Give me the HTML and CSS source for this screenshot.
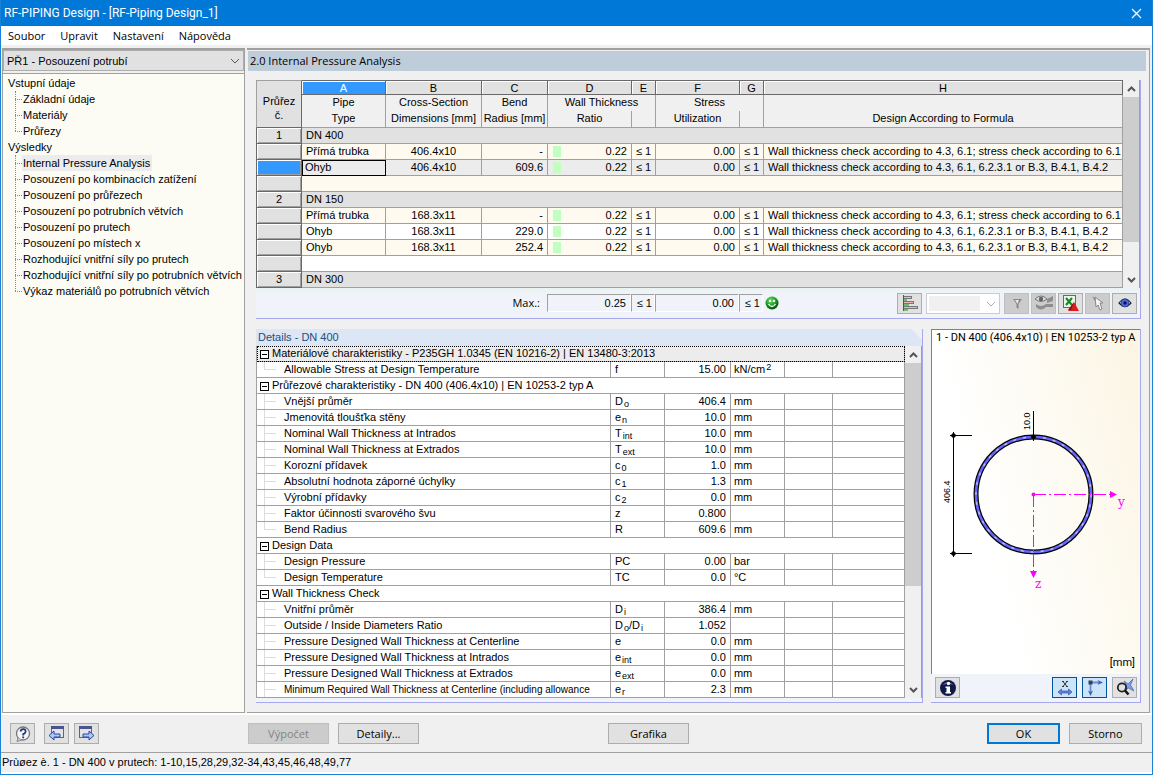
FILE: index.html
```html
<!DOCTYPE html>
<html lang="cs">
<head>
<meta charset="utf-8">
<title>RF-PIPING Design - [RF-Piping Design_1]</title>
<link rel="stylesheet" href="styles.css">
</head>
<body>
<div class="window">
  <header class="titlebar">
    <h1>RF-PIPING Design - [RF-Piping Design_1]</h1>
    <button class="close" aria-label="Close"><svg width="11" height="11"><path d="M1 1L10 10M10 1L1 10" stroke="#fff" stroke-width="1.2"/></svg></button>
  </header>
  <nav class="menubar">
    <button>Soubor</button><button>Upravit</button><button>Nastavení</button><button>Nápověda</button>
  </nav>

  <main class="workspace">
    <aside class="sidebar">
      <div class="case-wrap">
        <select class="case" aria-label="Case"><option>PŘ1 - Posouzení potrubí</option></select>
        <svg class="chev" width="10" height="6"><path d="M1 1L5 5L9 1" fill="none" stroke="#555"/></svg>
      </div>
      <ul class="tree">
        <li><a href="#">Vstupní údaje</a>
          <ul>
            <li><a href="#">Základní údaje</a></li>
            <li><a href="#">Materiály</a></li>
            <li><a href="#">Průřezy</a></li>
          </ul>
        </li>
        <li><a href="#">Výsledky</a>
          <ul>
            <li><a href="#" class="current">Internal Pressure Analysis</a></li>
            <li><a href="#">Posouzení po kombinacích zatížení</a></li>
            <li><a href="#">Posouzení po průřezech</a></li>
            <li><a href="#">Posouzení po potrubních větvích</a></li>
            <li><a href="#">Posouzení po prutech</a></li>
            <li><a href="#">Posouzení po místech x</a></li>
            <li><a href="#">Rozhodující vnitřní síly po prutech</a></li>
            <li><a href="#">Rozhodující vnitřní síly po potrubních větvích</a></li>
            <li><a href="#">Výkaz materiálů po potrubních větvích</a></li>
          </ul>
        </li>
      </ul>
    </aside>

    <section class="content">
      <h2>2.0 Internal Pressure Analysis</h2>
      <div class="panels">
        <section class="panel results">
          <div class="scroller">
            <table class="grid">
              <colgroup><col class="w46"><col class="w84"><col class="w96"><col class="w66"><col class="w84"><col class="w24"><col class="w84"><col class="w24"><col></colgroup>
              <thead>
                <tr class="letters"><th rowspan="3" class="corner">Průřez<br>č.</th><th class="picked">A</th><th>B</th><th>C</th><th>D</th><th>E</th><th>F</th><th>G</th><th>H</th></tr>
                <tr class="names"><th>Pipe</th><th>Cross-Section</th><th>Bend</th><th colspan="2">Wall Thickness</th><th colspan="2">Stress</th><th></th></tr>
                <tr class="names last"><th>Type</th><th>Dimensions [mm]</th><th>Radius [mm]</th><th>Ratio</th><th></th><th>Utilization</th><th></th><th>Design According to Formula</th></tr>
              </thead>
              <tbody>
                <tr class="group"><th>1</th><td colspan="8">DN 400</td></tr>
                <tr class="cream"><th></th><td>Přímá trubka</td><td class="c">406.4x10</td><td class="r">-</td><td class="r bar">0.22</td><td class="c">≤ 1</td><td class="r">0.00</td><td class="c">≤ 1</td><td>Wall thickness check according to 4.3, 6.1; stress check according to 6.1</td></tr>
                <tr class="active"><th></th><td class="cursor">Ohyb</td><td class="c">406.4x10</td><td class="r">609.6</td><td class="r bar">0.22</td><td class="c">≤ 1</td><td class="r">0.00</td><td class="c">≤ 1</td><td>Wall thickness check according to 4.3, 6.1, 6.2.3.1 or B.3, B.4.1, B.4.2</td></tr>
                <tr class="cream"><th></th><td colspan="8"></td></tr>
                <tr class="group"><th>2</th><td colspan="8">DN 150</td></tr>
                <tr class="cream"><th></th><td>Přímá trubka</td><td class="c">168.3x11</td><td class="r">-</td><td class="r bar">0.22</td><td class="c">≤ 1</td><td class="r">0.00</td><td class="c">≤ 1</td><td>Wall thickness check according to 4.3, 6.1; stress check according to 6.1</td></tr>
                <tr><th></th><td>Ohyb</td><td class="c">168.3x11</td><td class="r">229.0</td><td class="r bar">0.22</td><td class="c">≤ 1</td><td class="r">0.00</td><td class="c">≤ 1</td><td>Wall thickness check according to 4.3, 6.1, 6.2.3.1 or B.3, B.4.1, B.4.2</td></tr>
                <tr class="cream"><th></th><td>Ohyb</td><td class="c">168.3x11</td><td class="r">252.4</td><td class="r bar">0.22</td><td class="c">≤ 1</td><td class="r">0.00</td><td class="c">≤ 1</td><td>Wall thickness check according to 4.3, 6.1, 6.2.3.1 or B.3, B.4.1, B.4.2</td></tr>
                <tr><th></th><td colspan="8"></td></tr>
                <tr class="group"><th>3</th><td colspan="8">DN 300</td></tr>
              </tbody>
            </table>
            <div class="scrollbar">
              <svg width="9" height="6"><path d="M1 5L4.500 1.500L8 5" fill="none" stroke="#555" stroke-width="2"/></svg>
              <div class="track"><div class="thumb t-results"></div></div>
              <svg width="9" height="6"><path d="M1 1L4.500 4.500L8 1" fill="none" stroke="#555" stroke-width="2"/></svg>
            </div>
          </div>
          <div class="toolbar">
            <span class="max-label">Max.:</span>
            <output class="box w84">0.25</output><output class="box w24">≤ 1</output><output class="box w84">0.00</output><output class="box w24">≤ 1</output>
            <svg class="smiley" width="14" height="14"><defs><radialGradient id="g" cx=".4" cy=".3" r=".7"><stop offset="0" stop-color="#6fe06a"/><stop offset=".6" stop-color="#169a20"/><stop offset="1" stop-color="#064d0b"/></radialGradient></defs><circle cx="7" cy="7" r="6.500" fill="url(#g)"/><circle cx="5" cy="5" r="1.200" fill="#fff"/><circle cx="9" cy="5" r="1.200" fill="#fff"/><path d="M3.500 8Q7 13 10.500 8" fill="none" stroke="#fff" stroke-width="1.300"/></svg>
            <span class="spacer"></span>
            <div class="tools">
              <button class="ib" aria-label="Bars"><svg width="16" height="16" shape-rendering="crispEdges"><path d="M1.500 0V16" stroke="#555"/><path d="M2 1.500H9.500V3.500H2M2 6.500H11.500V8.500H2M2 11.500H15.500V13.500H2" fill="#f3b6b6" stroke="#777"/><path d="M2 5H5M2 10H7M2 15H6" stroke="#6cbf6c" stroke-width="2"/></svg></button>
              <div class="filter-wrap"><select class="filter" aria-label="Filter" disabled></select><svg class="chev" width="10" height="6"><path d="M1 1L5 5L9 1" fill="none" stroke="#aaa"/></svg></div>
              <button class="ib off" disabled aria-label="Filter rows"><svg width="16" height="16"><path d="M4 4H13L9.500 9V14L7.500 12.500V9Z" fill="#888"/><path d="M6 5H10L8.500 9Z" fill="#e8e8e8"/></svg></button>
              <button class="ib off" disabled aria-label="View options"><svg width="18" height="16"><path d="M0 4Q6-2 12 4Q6 9 0 4Z" fill="#ddd" stroke="#777"/><circle cx="6" cy="4" r="2.200" fill="#666"/><path d="M12 4L18 1V6L12 8ZM1 9Q6 13 11 9H18V12H11Q6 17 1 12Z" fill="#8e8e8e"/></svg></button>
              <button class="ib" aria-label="Export to Excel"><svg width="16" height="16"><rect x=".5" y=".5" width="12" height="12" fill="#eaf7e6" stroke="#2f8f3a"/><path d="M3 3L9 10M9 3L3 10" stroke="#14852a" stroke-width="2"/><path d="M11 7L16 16H5Z" fill="#d81f1f"/><path d="M11 7L8 15H5Z" fill="#8f1010"/></svg></button>
              <button class="ib off" disabled aria-label="Pick"><svg width="16" height="16"><path d="M2 1L6 4L5 6Z" fill="#888"/><path d="M5 2L13 8H10L12 14L10 15L8 10L6 12Z" fill="#f4f4f4" stroke="#888"/></svg></button>
              <button class="ib" aria-label="Show"><svg width="14" height="12"><path d="M1 6Q7-2 13 6Q7 13 1 6Z" fill="#e7ecfa" stroke="#222" stroke-width="1.200"/><circle cx="7" cy="6" r="4" fill="#4a6be0" stroke="#223a90" stroke-width=".8"/><circle cx="7" cy="6" r="1.700" fill="#0a1450"/></svg></button>
            </div>
          </div>
        </section>

        <div class="lower">
          <section class="panel details">
            <h3>Details - DN 400</h3>
            <div class="scroller">
              <div class="clip">
              <table class="props">
                <colgroup><col><col class="w54"><col class="w66"><col class="w54"><col class="w48"><col class="w72"></colgroup>
                <tbody>
                  <tr class="head sel"><td colspan="6"><button aria-label="Collapse"></button>Materiálové charakteristiky - P235GH 1.0345 (EN 10216-2) | EN 13480-3:2013</td></tr>
                  <tr class="end"><td>Allowable Stress at Design Temperature</td><td>f</td><td>15.00</td><td>kN/cm<sup>2</sup></td><td></td><td></td></tr>
                  <tr class="head"><td colspan="6"><button aria-label="Collapse"></button>Průřezové charakteristiky - DN 400 (406.4x10) | EN 10253-2 typ A</td></tr>
                  <tr><td>Vnější průměr</td><td>D<sub>o</sub></td><td>406.4</td><td>mm</td><td></td><td></td></tr>
                  <tr><td>Jmenovitá tloušťka stěny</td><td>e<sub>n</sub></td><td>10.0</td><td>mm</td><td></td><td></td></tr>
                  <tr><td>Nominal Wall Thickness at Intrados</td><td>T<sub>int</sub></td><td>10.0</td><td>mm</td><td></td><td></td></tr>
                  <tr><td>Nominal Wall Thickness at Extrados</td><td>T<sub>ext</sub></td><td>10.0</td><td>mm</td><td></td><td></td></tr>
                  <tr><td>Korozní přídavek</td><td>c<sub>0</sub></td><td>1.0</td><td>mm</td><td></td><td></td></tr>
                  <tr><td>Absolutní hodnota záporné úchylky</td><td>c<sub>1</sub></td><td>1.3</td><td>mm</td><td></td><td></td></tr>
                  <tr><td>Výrobní přídavky</td><td>c<sub>2</sub></td><td>0.0</td><td>mm</td><td></td><td></td></tr>
                  <tr><td>Faktor účinnosti svarového švu</td><td>z</td><td>0.800</td><td></td><td></td><td></td></tr>
                  <tr class="end"><td>Bend Radius</td><td>R</td><td>609.6</td><td>mm</td><td></td><td></td></tr>
                  <tr class="head"><td colspan="6"><button aria-label="Collapse"></button>Design Data</td></tr>
                  <tr><td>Design Pressure</td><td>PC</td><td>0.00</td><td>bar</td><td></td><td></td></tr>
                  <tr class="end"><td>Design Temperature</td><td>TC</td><td>0.0</td><td>°C</td><td></td><td></td></tr>
                  <tr class="head"><td colspan="6"><button aria-label="Collapse"></button>Wall Thickness Check</td></tr>
                  <tr><td>Vnitřní průměr</td><td>D<sub>i</sub></td><td>386.4</td><td>mm</td><td></td><td></td></tr>
                  <tr><td>Outside / Inside Diameters Ratio</td><td>D<sub>o</sub>/D<sub>i</sub></td><td>1.052</td><td></td><td></td><td></td></tr>
                  <tr><td>Pressure Designed Wall Thickness at Centerline</td><td>e</td><td>0.0</td><td>mm</td><td></td><td></td></tr>
                  <tr><td>Pressure Designed Wall Thickness at Intrados</td><td>e<sub>int</sub></td><td>0.0</td><td>mm</td><td></td><td></td></tr>
                  <tr><td>Pressure Designed Wall Thickness at Extrados</td><td>e<sub>ext</sub></td><td>0.0</td><td>mm</td><td></td><td></td></tr>
                  <tr class="long"><td>Minimum Required Wall Thickness at Centerline (including allowance</td><td>e<sub>r</sub></td><td>2.3</td><td>mm</td><td></td><td></td></tr>
                </tbody>
              </table>
              </div>
              <div class="scrollbar">
                <svg width="9" height="6"><path d="M1 5L4.500 1.500L8 5" fill="none" stroke="#555" stroke-width="2"/></svg>
                <div class="track"><div class="thumb t-details"></div></div>
                <svg width="9" height="6"><path d="M1 1L4.500 4.500L8 1" fill="none" stroke="#555" stroke-width="2"/></svg>
              </div>
            </div>
          </section>

          <section class="panel preview">
            <div class="plot">
              <p>1 - DN 400 (406.4x10) | EN 10253-2 typ A</p>
              <svg class="section" viewBox="0 0 208 260" width="208" height="260">
                <circle cx="101.500" cy="148.500" r="57.500" fill="none" stroke="#000" stroke-width="5"/>
                <circle cx="101.500" cy="148.500" r="57.500" fill="none" stroke="#6464ff" stroke-width="2.600"/>
                <circle cx="101.500" cy="148.500" r="57.500" fill="none" stroke="#b9b9e8" stroke-width="1.500" stroke-dasharray="3 7"/>
                <path d="M21.500 86V211M18 89.500H40M18 207.500H40M101.500 65V95" stroke="#000"/>
                <path d="M21.500 86.500L24.500 89.500L21.500 92.500L18.500 89.500ZM21.500 204.500L24.500 207.500L21.500 210.500L18.500 207.500ZM101.500 88L104.500 91L101.500 94L98.500 91Z"/>
                <text class="dim" transform="translate(18 157) rotate(-90)">406.4</text>
                <text class="dim" transform="translate(98 84) rotate(-90)">10.0</text>
                <g stroke="#f0f" fill="#f0f"><circle cx="101.500" cy="148.500" r="2" stroke="none"/><path d="M102 148.500H180M101.500 149V227" stroke-dasharray="12 3 2 3"/><path d="M178 145L185 148.500L178 152ZM98 225L101.500 232L105 225Z" stroke="none"/></g>
                <text class="axis" x="186" y="160">y</text><text class="axis" x="103" y="242">z</text>
              </svg>
              <p class="unit">[mm]</p>
            </div>
            <div class="plot-tools">
              <button class="ib" aria-label="Info"><svg width="18" height="18"><circle cx="9" cy="9" r="8" fill="#101a4a"/><path d="M4 6A6 6 0 0 1 14 6Q9 3 4 6Z" fill="#6a78b0"/><circle cx="9.500" cy="4.500" r="1.700" fill="#fff"/><path d="M6.500 7.500H11V13H12V14.500H6.500V13H7.500V9H6.500Z" fill="#fff"/></svg></button>
              <span class="spacer"></span>
              <button class="ib on" aria-label="Dimensions"><svg width="16" height="16"><path d="M6 1.500L10 6.500M10 1.500L6 6.500M5 1.500H7M9 1.500H11M5 6.500H7M9 6.500H11" stroke="#222" stroke-width=".9"/><path d="M1 12L4.500 9V11H11.500V9L15 12L11.500 15V13H4.500V15Z" fill="#5c7fe0" stroke="#4460b8" stroke-width=".8"/></svg></button>
              <button class="ib on" aria-label="Axes"><svg width="16" height="16"><path d="M3.500 3V12M3 2.500H12" stroke="#6d89d8" stroke-width="1.800"/><path d="M10.500 0L16 2.500L10.500 5L12 2.500ZM1 10.500L3.500 16L6 10.500L3.500 12Z" fill="#3c5cc0"/><rect x="1.500" y=".5" width="4" height="4" fill="#34405e"/></svg></button>
              <button class="ib" aria-label="Zoom all"><svg width="18" height="17"><path d="M8 2L12 5L17 0L14.500 6L18 12L12.500 9L8 12L10.500 6.500Z" fill="#7c9cec" stroke="#3d5fb8" stroke-width=".7"/><circle cx="6" cy="8.500" r="4.200" fill="none" stroke="#222" stroke-width="1.800"/><path d="M9 11.500L12.500 15.500" stroke="#111" stroke-width="2.500"/></svg></button>
            </div>
          </section>
        </div>
      </div>
    </section>
  </main>

  <footer class="actions">
    <div class="nav">
      <button class="ib" aria-label="Help"><svg width="16" height="16"><circle cx="8" cy="7.500" r="6.500" fill="#f4f6fb" stroke="#777" stroke-width="1.300"/><path d="M3 12L2 15.500L7 14" fill="#ccc" stroke="#888"/><path d="M5.500 5.500Q6 3 8.500 3.200T10.500 6Q10 7.500 8.200 8.200V9.500M8.200 10.500V12.200" fill="none" stroke="#24376f" stroke-width="1.800"/></svg></button>
      <button class="ib prev" aria-label="Previous"><svg width="17" height="17"><rect x="3.500" y="1.500" width="12" height="11" fill="#e4e4e4" stroke="#666"/><path d="M3 1H16V4H3Z" fill="#4a5590"/><path d="M1 10.500L6 6V9H12V12H6V15Z" fill="#a9c6f8" stroke="#2a48a8"/></svg></button>
      <button class="ib" aria-label="Next"><svg width="17" height="17"><rect x="1.500" y="1.500" width="12" height="11" fill="#e4e4e4" stroke="#666"/><path d="M1 1H14V4H1Z" fill="#4a5590"/><path d="M16 10.500L11 6V9H5V12H11V15Z" fill="#a9c6f8" stroke="#2a48a8"/></svg></button>
    </div>
    <button class="btn" disabled>Výpočet</button>
    <button class="btn">Detaily...</button>
    <button class="btn mid">Grafika</button>
    <span class="spacer"></span>
    <button class="btn short ok">OK</button>
    <button class="btn short">Storno</button>
  </footer>
  <div class="status">Prùøez è. 1 - DN 400 v prutech: 1-10,15,28,29,32-34,43,45,46,48,49,77</div>
</div>
</body>
</html>
```
FILE: styles.css
```css
* { box-sizing: border-box; }
body { margin: 0; background: #f0f0f0; color: #000; font: 11px/16px "Liberation Sans", Arial, sans-serif; }
h1, h2, h3, p, ul { margin: 0; padding: 0; font-size: 11px; font-weight: normal; }
ul { list-style: none; }
a { color: inherit; text-decoration: none; }
button, select, output { font: inherit; color: inherit; }
svg { display: block; flex: none; }
.spacer { flex: 1; }

.window { display: flex; flex-direction: column; height: 100vh; border: 1px solid #1a82d8; border-top: 0; }
.titlebar { display: flex; align-items: center; justify-content: space-between; height: 26px; flex: none; padding: 0 10px 0 3px; background: #0078d7; color: #fff; }
.titlebar h1 { font: 12px/16px Roboto, sans-serif; }
.close { display: flex; padding: 0; border: 0; background: none; }
.menubar { display: flex; gap: 15px; flex: none; height: 19px; padding: 0 7px; background: #fff; }
.menubar button { padding: 0; border: 0; background: none; font: 11px/19px "Open Sans", sans-serif; }

.workspace { display: flex; gap: 2px; flex: 1; min-height: 0; padding: 3px 2px 0 1px; }
.sidebar { flex: none; width: 243px; display: flex; flex-direction: column; border: 1px solid #a0a0a0; border-top-width: 2px; background: #fcfcf4; }
.case-wrap, .filter-wrap { position: relative; }
.case-wrap { padding-bottom: 2px; border-bottom: 1px solid #a0a0a0; background: #f0f0f0; }
.case { appearance: none; display: block; width: 100%; height: 21px; padding: 0 3px; border: 1px solid #adadad; border-radius: 0; background: #e1e1e1; }
.chev { position: absolute; right: 4px; top: 8px; }
.tree { padding: 1px 5px; white-space: nowrap; }
.tree ul { position: relative; padding-left: 7px; }
.tree ul::before { content: ""; position: absolute; left: 7px; top: 0; bottom: 8px; border-left: 1px dotted #888; }
.tree li { line-height: 16px; }
.tree ul li { display: flex; align-items: center; }
.tree ul li::before { content: ""; flex: none; width: 7px; border-top: 1px dotted #888; }
.tree a { display: inline-block; }
.tree ul a { padding: 0 2px 0 1px; }
.tree .current { background: #ececec; }

.content { flex: 1; min-width: 0; display: flex; flex-direction: column; padding: 1px 2px 0 1px; border: 1px solid #a0a0a0; border-top-width: 2px; border-left: 0; }
.content h2 { flex: none; height: 20px; margin-right: 1px; padding-left: 2px; background: #bfcddb; font: 11px/19px "Open Sans", sans-serif; }
.panels { flex: 1; min-height: 0; display: flex; flex-direction: column; gap: 10px; padding: 9px 6px 9px 8px; }
.panel { border: 0 solid #a8a8ec; border-width: 0 1px 1px 0; background: #f0f4fa; }
.results { flex: none; }
.scroller { display: flex; background: #f0f0f0; }
.scrollbar { flex: none; width: 17px; display: flex; flex-direction: column; align-items: center; padding: 6px 0 5px; background: #f0f0f0; border-right: 1px solid #a0a0a0; }
.track { flex: 1; width: 100%; padding: 5px 0; }
.thumb { background: #cdcdcd; }
.t-results { height: 83%; }
.t-details { height: 70%; }

table { flex: 1; width: 100%; table-layout: fixed; border-collapse: separate; border-spacing: 0; }
td, th { height: 16px; padding: 0 4px; overflow: hidden; border: 0 solid #a0a0a0; border-width: 0 1px 1px 0; font-weight: normal; line-height: 15px; white-space: nowrap; text-align: left; }
.w24 { width: 24px; }
.w46 { width: 46px; }
.w48 { width: 48px; }
.w54 { width: 54px; }
.w66 { width: 66px; }
.w72 { width: 72px; }
.w84 { width: 84px; }
.w96 { width: 96px; }
.grid { background: #fff; }
.grid td:last-child { padding-right: 0; }
.grid thead th { padding: 0; text-align: center; background: #f0f0f0; }
.grid .letters th { height: 15px; line-height: 12px; border-top: 1px solid #696969; border-right-color: #696969; border-bottom-color: #696969; background: #e1e1e1; box-shadow: inset 1px 1px #fff; }
.grid .letters .picked { background: #3399ff; color: #fff; }
.grid .letters .corner { border-top-color: #a0a0a0; border-left: 1px solid #a0a0a0; line-height: 14px; padding-top: 8px; box-shadow: none; }
.grid .names th { border-bottom: 0; line-height: 14px; vertical-align: top; }
.grid .last th { height: 17px; border-bottom: 1px solid #a0a0a0; }
.grid tbody th { border-left: 1px solid #696969; border-right-color: #696969; border-bottom-color: #696969; background: #e1e1e1; text-align: center; box-shadow: inset 1px 1px #fff, inset -1px -1px #a0a0a0; line-height: 13px; }
.group td { background: #e1e1e1; }
.cream td { background: #fffaf0; }
.active td { background: #ececec; }
.grid .active th { background: #3399ff; }
.grid .cursor { padding-left: 3px; outline: 1px solid #000; outline-offset: -1px; }
.grid .c { padding: 0; text-align: center; }
.r, .props td:nth-child(3) { text-align: right; }
.grid .bar { background-image: linear-gradient(#c0ffc0, #c0ffc0); background-size: 8px 11px; background-position: 5px 2px; background-repeat: no-repeat; }

.toolbar { display: flex; align-items: center; height: 30px; padding-right: 3px; background: linear-gradient(#ebf2f2, #f0f4fa 6px); }
.max-label { width: 291px; padding-right: 7px; text-align: right; font: 11px/16px "Open Sans", sans-serif; }
.box { height: 18px; padding-right: 4px; border: 1px solid #a0a0a0; border-right-color: #fff; border-bottom-color: #fff; text-align: right; line-height: 16px; white-space: nowrap; }
.box.w24 { padding-right: 2px; }
.smiley { margin-left: 2px; }
.tools { display: flex; gap: 2px; }
.ib { display: flex; align-items: center; justify-content: center; width: 25px; height: 21px; padding: 0; border: 1px solid #adadad; background: #e1e1e1; }
.ib.off { background: #ccc; border-color: #bfbfbf; }
.ib.on { background: #cce4f7; border-color: #005499; }
.filter-wrap { margin: 0 2px; }
.filter { appearance: none; display: block; width: 74px; height: 21px; border: 1px solid #ccc; border-radius: 0; background: linear-gradient(#f0f0f0, #f0f0f0) 2px 2px / 51px 15px no-repeat #fff; opacity: 1; }

.lower { flex: 1; min-height: 0; display: flex; gap: 8px; }
.details { flex: 1; min-width: 0; display: flex; flex-direction: column; }
.details h3 { flex: none; height: 17px; padding-left: 2px; background: linear-gradient(225deg, #f0f0f0 7px, #dce6f4 8px); color: #1f4e79; }
.details .scroller { flex: 1; min-height: 0; margin-bottom: 4px; }
.clip { flex: 1; min-width: 0; overflow: hidden; border-left: 1px solid #a0a0a0; }
.props { background: #fff; }
.props td:first-child { padding-left: 27px; background: linear-gradient(#ddd, #ddd) 7px 0 / 1px 100% no-repeat, linear-gradient(#ddd, #ddd) 7px 7px / 12px 1px no-repeat; }
.props .end td:first-child { background-size: 1px 8px, 12px 1px; }
.props .head td:first-child { padding-left: 3px; background: none; }
.props .sel td:first-child { background: #ececec; outline: 1px dotted #000; outline-offset: -1px; }
.props .long td:first-child { font-size: 10px; }
.props td:nth-child(4) { padding-left: 3px; padding-right: 0; }
.props button { width: 9px; height: 9px; margin: 0 3px 0 0; padding: 0; border: 1px solid #000; vertical-align: -1px; background: linear-gradient(#000, #000) center / 5px 1px no-repeat #fff; }
sub, sup { margin-left: 1px; font-size: 9px; line-height: 0; }
sub { vertical-align: -2px; }
sup { vertical-align: 3px; }

.preview { flex: none; width: 210px; display: flex; flex-direction: column; }
.plot { flex: 1; min-height: 0; display: flex; flex-direction: column; border: 1px solid #808080; border-width: 1px 0 0 1px; background: linear-gradient(75deg, #fff 30%, #fbf5e3); white-space: nowrap; }
.plot p { padding-left: 4px; font-family: Roboto, sans-serif; }
.plot .unit { margin-top: auto; padding: 0 5px 3px; text-align: right; }
.section .dim { font-size: 9px; }
.section .axis { font: 12px "DejaVu Serif", serif; fill: #f0f; }
.plot-tools { flex: none; display: flex; gap: 5px; padding: 3px 3px 4px 4px; }

.actions { flex: none; display: flex; align-items: center; gap: 9px; height: 40px; padding: 0 10px 0 9px; border-top: 2px solid #fff; border-bottom: 1px solid #a0a0a0; }
.nav { display: flex; gap: 5px; width: 229px; }
.nav .prev { margin-left: 4px; }
.btn { width: 81px; height: 21px; padding: 0; border: 1px solid #adadad; background: #e1e1e1; font: 11px/17px "Open Sans", sans-serif; }
.btn:disabled { background: #ccc; border-color: #bfbfbf; color: #838383; }
.btn.mid { margin-left: 180px; }
.btn.short { width: 73px; }
.btn.ok { border: 2px solid #0078d7; }
.status { flex: none; height: 21px; line-height: 19px; border-bottom: 2px solid #fff; padding-left: 1px; }
```
